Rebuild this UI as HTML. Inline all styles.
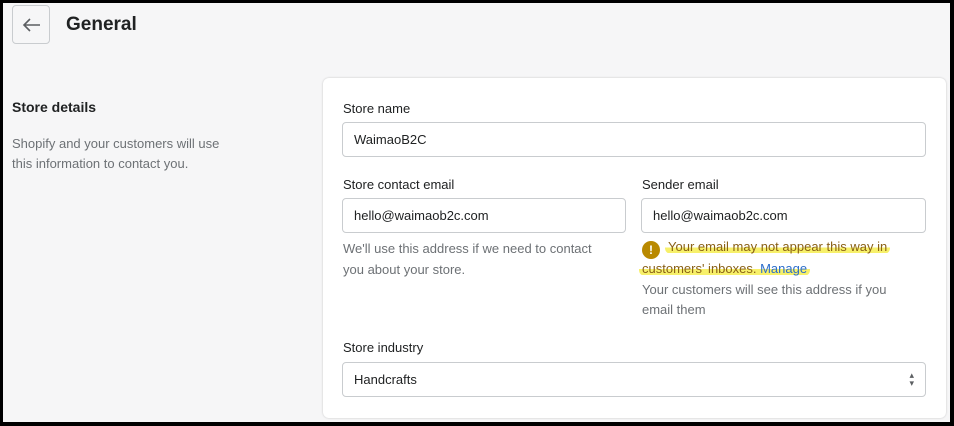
<!DOCTYPE html>
<html><head><style>
*{box-sizing:border-box;margin:0;padding:0}
body{width:954px;height:426px;overflow:hidden;background:#000;font-family:"Liberation Sans",sans-serif;position:relative}
.pg{position:absolute;left:3px;top:3px;width:947px;height:419px;background:#f6f6f7;overflow:hidden}
.back{position:absolute;left:9px;top:2px;width:38px;height:39px;border:1px solid #c9cccf;border-radius:4px;background:#f6f6f7}
.title{position:absolute;left:63px;top:11px;font-size:19px;font-weight:bold;color:#202223}
.h{position:absolute;left:9px;top:96px;font-size:14px;font-weight:bold;color:#202223}
.d{position:absolute;left:9px;top:131px;font-size:13px;line-height:20px;color:#6d7175}
.card{position:absolute;left:320px;top:75px;width:623px;height:340px;background:#fff;border-radius:6px;box-shadow:0 0 2px rgba(0,0,0,.2)}
.lab{position:absolute;font-size:13px;color:#202223}
.in{position:absolute;height:35px;border:1px solid #c9cccf;border-radius:4px;font-size:13px;color:#202223;padding:9px 11px}
.hint{position:absolute;font-size:13px;line-height:21px;color:#6d7175}
.hl{background:linear-gradient(to bottom,transparent 55%,#f7f06a 55%,#f7f06a 92%,transparent 92%);border-radius:6px;color:#8a6116;padding:0 3px;margin-left:-3px}
</style></head><body><div class="pg">
<div class="back"><svg width="38" height="38" viewBox="0 0 38 38"><path d="M27 19H12M17 13l-6 6 6 6" stroke="#5c5f62" stroke-width="1.6" fill="none"/></svg></div>
<div class="title">General</div>
<div class="h">Store details</div>
<div class="d">Shopify and your customers will use<br>this information to contact you.</div>
<div class="card">
<div class="lab" style="left:20px;top:23px">Store name</div>
<div class="in" style="left:19px;top:44px;width:584px">WaimaoB2C</div>
<div class="lab" style="left:20px;top:99px">Store contact email</div>
<div class="in" style="left:19px;top:120px;width:284px">hello@waimaob2c.com</div>
<div class="hint" style="left:20px;top:160px">We'll use this address if we need to contact<br>you about your store.</div>
<div class="lab" style="left:319px;top:99px">Sender email</div>
<div class="in" style="left:318px;top:120px;width:285px">hello@waimaob2c.com</div>
<div class="hint" style="left:319px;top:159px;width:290px;line-height:20.5px"><span style="display:inline-block;width:18px;height:18px;border-radius:50%;background:#b98900;color:#fff;font-weight:bold;font-size:12px;text-align:center;line-height:18px;vertical-align:-3px;margin-right:8px">!</span><span class="hl">Your email may not appear this way in</span><br><span class="hl">customers' inboxes. <span style="color:#2c6ecb">Manage</span></span><br>Your customers will see this address if you<br>email them</div>
<div class="lab" style="left:20px;top:262px">Store industry</div>
<div class="in" style="left:19px;top:284px;width:584px">Handcrafts<span style="position:absolute;right:11px;top:8px;font-size:9px;line-height:8px;color:#5c5f62">▴<br>▾</span></div>
</div>
</div></body></html>
